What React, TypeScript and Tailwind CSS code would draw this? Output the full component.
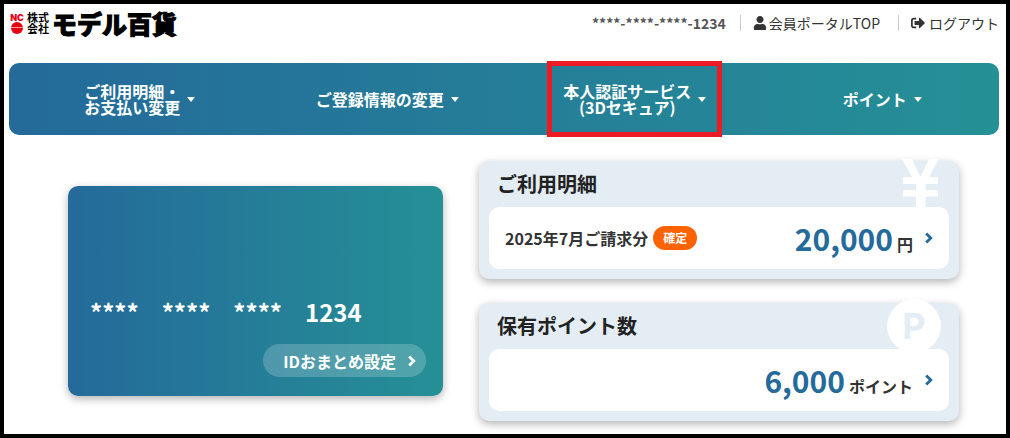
import React, { useState } from 'react';
import { FaUser, FaSignOutAlt } from 'react-icons/fa';

type MenuItem = {
  id: string;
  lines: string[];
  highlighted?: boolean;
};

const menuItems: MenuItem[] = [
  { id: 'statement', lines: ['ご利用明細・', 'お支払い変更'] },
  { id: 'profile', lines: ['ご登録情報の変更'] },
  { id: 'secure', lines: ['本人認証サービス', '(3Dセキュア)'], highlighted: true },
  { id: 'point', lines: ['ポイント'] },
];

const cardNumber = ['****', '****', '****', '1234'];

const Chevron = ({ className }: { className: string }) => (
  <svg viewBox="0 0 8 12" className={className} fill="none" stroke="currentColor" strokeWidth="2.8" aria-hidden="true">
    <path d="M1.2 1.4L5.8 6L1.2 10.6" />
  </svg>
);

const YenIcon = ({ className }: { className: string }) => (
  <svg viewBox="0 0 37 48" className={className} fill="currentColor" aria-hidden="true">
    <path d="M0 0h10l8.5 18L27 0h10L27 18h9v7H23.5v6H36v6.500H23.5V48H14V37.5H1V31h13v-6H1v-7h9z" />
  </svg>
);

const Logo = () => (
  <a href="#top" className="flex items-center text-black">
    <span className="flex w-4 flex-col items-center">
      <span className="font-[Inter,sans-serif] text-[9px] leading-[9px] font-black text-[#e60012]">NC</span>
      <svg viewBox="0 0 12 12" className="h-3 w-3" aria-hidden="true">
        <circle cx="6" cy="6" r="6" fill="#e60012" />
        <path d="M0 5.5h12" stroke="#fff" strokeWidth="0.6" />
      </svg>
    </span>
    <span className="ml-0.5 text-[11px] leading-[11px] font-bold">
      株式
      <br />
      会社
    </span>
    <span className="ml-[3px] text-[25px] leading-6 font-black [-webkit-text-stroke:1px_black]">モデル百貨</span>
  </a>
);

const Header = () => (
  <header className="flex h-[59px] items-start justify-between pt-[7px] text-sm">
    <Logo />
    <div className="flex h-6 items-center text-[#333]">
      <p className="mr-3.5 font-bold text-[#555]">****-****-****-1234</p>
      <a href="#portal" className="flex h-4 items-center gap-0.5 border-l border-[#ccc] pr-[18px] pl-3">
        <FaUser className="h-3.5 w-3.5" />
        会員ポータルTOP
      </a>
      <a href="#logout" className="flex h-4 items-center gap-1 border-l border-[#ccc] pl-3">
        <FaSignOutAlt className="h-3.5 w-3.5" />
        ログアウト
      </a>
    </div>
  </header>
);

const GlobalNav = () => {
  const [openId, setOpenId] = useState<string | null>(null);

  return (
    <nav className="grid h-[72px] grid-cols-4 rounded-[10px] bg-linear-to-r/srgb from-[#246a9a] to-[#259096] text-white">
      {menuItems.map(item => (
        <div key={item.id} className="flex justify-center pl-3.5">
          <button
            type="button"
            aria-expanded={openId === item.id}
            onClick={() => setOpenId(openId === item.id ? null : item.id)}
            className="relative flex cursor-pointer items-center gap-[7px] text-base leading-4 font-bold"
          >
            <span>
              {item.lines.map(line => (
                <span key={line} className="block">{line}</span>
              ))}
            </span>
            <svg viewBox="0 0 8 5" className="h-[5px] w-2" fill="currentColor" aria-hidden="true">
              <path d="M0 0h8L4 5z" />
            </svg>
            {item.highlighted && (
              <span className="absolute -inset-x-4 -inset-y-0.5 border-5 border-[#ed1c24]" />
            )}
          </button>
        </div>
      ))}
    </nav>
  );
};

const MemberCard = () => (
  <section className="flex h-[210px] w-[375px] shrink-0 flex-col justify-end rounded-[10px] bg-linear-to-r/srgb from-[#246a9a] to-[#259096] px-[17px] pb-[19px] text-white shadow-[0_3px_8px_rgba(0,0,0,0.3)]">
    <p className="flex gap-[23px] pl-[5px] text-2xl leading-8 font-bold">
      {cardNumber.map((part, i) => (
        <span key={i}>{part}</span>
      ))}
    </p>
    <a
      href="#id"
      className="mt-4 flex h-[33px] items-center gap-3 self-end rounded-full bg-white/20 pr-2.5 pl-5 text-base font-bold"
    >
      IDおまとめ設定
      <Chevron className="h-3 w-2" />
    </a>
  </section>
);

type PanelProps = {
  title: string;
  amount: string;
  unit: string;
  icon: React.ReactNode;
  children?: React.ReactNode;
};

const Panel = ({ title, amount, unit, icon, children }: PanelProps) => (
  <section className="relative rounded-[10px] bg-[#e4ecf4] px-2.5 pb-2.5 shadow-[0_3px_8px_rgba(0,0,0,0.3)]">
    {icon}
    <h2 className="pl-2 text-xl leading-[46px] font-bold text-[#222]">{title}</h2>
    <a
      href="#detail"
      className="relative flex h-[62px] items-center rounded-[10px] bg-white px-4 font-bold text-[#333]"
    >
      {children}
      <span className="ml-auto flex items-baseline gap-1">
        <span className="text-3xl text-[#246a9a]">{amount}</span>
        {unit}
      </span>
      <Chevron className="ml-3 h-3 w-2 text-[#246a9a]" />
    </a>
  </section>
);

const App = () => {
  return (
    <div className="border-4 border-black bg-white pr-[7px] pb-[13px] pl-[5px] font-['Noto_Sans_CJK_JP',sans-serif]">
      <Header />
      <GlobalNav />
      <main className="flex items-start gap-9 pt-[26px] pr-10 pl-[59px]">
        <div className="pt-[25px]">
          <MemberCard />
        </div>
        <div className="flex flex-1 flex-col gap-6">
          <Panel
            title="ご利用明細"
            amount="20,000"
            unit="円"
            icon={<YenIcon className="absolute -top-0.5 right-5 h-12 w-[37px] text-white" />}
          >
            <span>2025年7月ご請求分</span>
            <span className="ml-[5px] flex h-6 items-center rounded-full bg-[#ff6200] px-2.5 text-xs text-white">確定</span>
          </Panel>
          <Panel
            title="保有ポイント数"
            amount="6,000"
            unit="ポイント"
            icon={
              <span className="absolute -top-1 right-[18px] flex h-[54px] w-[54px] items-center justify-center rounded-full bg-white font-[Inter,sans-serif] text-4xl font-bold text-[#e4ecf4]">
                P
              </span>
            }
          />
        </div>
      </main>
    </div>
  );
};

export default App;
